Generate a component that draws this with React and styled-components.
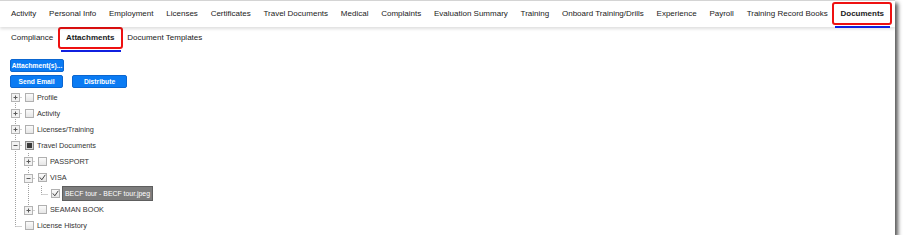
import React from "react";
import styled, { createGlobalStyle } from "styled-components";

const Global = createGlobalStyle`
  html, body { margin: 0; padding: 0; background: #ffffff; }
  body { font-family: "Liberation Sans", Arial, sans-serif; }
`;

const Frame = styled.div`
  width: 895px;
  height: 235px;
  box-sizing: border-box;
  background: #ffffff;
  border-top: 1px solid #d4d4d4;
  box-shadow: 3px 3px 4px rgba(0, 0, 0, 0.65);
  overflow: hidden;
  display: flex;
  flex-direction: column;
`;

const NavBar = styled.nav`
  position: relative;
  z-index: 1;
  display: flex;
  align-items: flex-start;
  height: 26px;
  box-sizing: border-box;
  padding: 1px 0 0 4.6px;
  background: #ffffff;
  box-shadow: 0 2px 3px rgba(0, 0, 0, 0.13);
`;

const SubBar = styled.div`
  display: flex;
  align-items: flex-start;
  padding-left: 4.6px;
`;

const Tab = styled.div`
  display: flex;
  flex-direction: column;
`;

const TabLabel = styled.span`
  display: block;
  height: ${(p) => p.$h}px;
  line-height: ${(p) => p.$h - 4}px;
  box-sizing: border-box;
  padding: 0 ${(p) => (p.$active ? 6.4 : 4.4)}px;
  margin: 0 ${(p) => (p.$active ? -2 : 0)}px;
  border: 2px solid ${(p) => (p.$active ? "#ee1111" : "transparent")};
  border-radius: 3px;
  font-size: 8px;
  font-weight: ${(p) => (p.$active ? 700 : 400)};
  color: #1a1a1a;
  white-space: nowrap;
`;

const TabLine = styled.span`
  display: block;
  height: 2px;
  margin: 1px 0 0 ${(p) => (p.$active ? 1 : 0)}px;
  background: ${(p) => (p.$active ? "#1020e0" : "transparent")};
`;

const Buttons = styled.div`
  display: flex;
  flex-direction: column;
  gap: 3px;
  margin: 7px 0 0 10px;
`;

const ButtonRow = styled.div`
  display: flex;
  gap: 9px;
`;

const Button = styled.button`
  width: ${(p) => p.$w}px;
  height: 13px;
  padding: 0;
  box-sizing: border-box;
  border: 1px solid #0b66d0;
  border-radius: 2px;
  background: #0a7bf3;
  color: #ffffff;
  font-family: "Liberation Sans", Arial, sans-serif;
  font-size: 6.7px;
  font-weight: 700;
  line-height: 11px;
  text-align: center;
  white-space: nowrap;
  cursor: pointer;
`;

const Tree = styled.ul`
  list-style: none;
  margin: 1px 0 0;
  padding: 0 0 0 9px;
`;

const Row = styled.li`
  display: flex;
  align-items: center;
  height: 16.1px;
`;

const GuideSvg = styled.svg`
  display: block;
  flex: none;
  width: 13px;
  height: 16px;
`;

const Check = styled.span`
  flex: none;
  width: 9px;
  height: 9px;
  box-sizing: border-box;
  margin-left: 3px;
  display: inline-flex;
  align-items: center;
  justify-content: center;
  border: 1px solid ${(p) => (p.$state === "partial" ? "#8a8a8a" : "#b0b0b0")};
  background: ${(p) =>
    p.$state === "partial" ? "#3a3a3a" : "linear-gradient(#fbfbfb, #e6e6e6)"};
  box-shadow: ${(p) => (p.$state === "partial" ? "inset 0 0 0 1px #d6d6d6" : "none")};
`;

const Label = styled.span`
  margin-left: ${(p) => (p.$selected ? 2 : 3)}px;
  padding: ${(p) => (p.$selected ? "1px 2px" : "0")};
  font-size: ${(p) => (p.$selected ? 6.9 : 7.3)}px;
  line-height: 11px;
  color: ${(p) => (p.$selected ? "#ffffff" : "#333333")};
  background: ${(p) => (p.$selected ? "#7c7c7c" : "transparent")};
  border: ${(p) => (p.$selected ? "1px solid #5e5e5e" : "none")};
  white-space: nowrap;
`;

const LINE = { stroke: "#a0a0a0", strokeWidth: 1, strokeDasharray: "1 1", fill: "none" };

function Guide({ kind, expander }) {
  const v = {
    pass: "M6.5 0V16",
    tee: "M6.5 0V16",
    first: "M6.5 8V16",
    elbow: "M6.5 0V8.5",
    blank: null,
  }[kind];
  const h = kind === "pass" || kind === "blank" ? null : "M6.5 8.5H13";
  return (
    <GuideSvg viewBox="0 0 13 16">
      {v && <path d={v} {...LINE} />}
      {h && <path d={h} {...LINE} />}
      {expander && (
        <g>
          <rect x="2.5" y="4.5" width="8" height="8" fill="#f2f2f2" stroke="#b4b4b4" />
          <path d="M4.5 8.5H8.5" stroke="#5a5a5a" />
          {expander === "+" && <path d="M6.5 6.5V10.5" stroke="#5a5a5a" />}
        </g>
      )}
    </GuideSvg>
  );
}

function CheckBox({ state }) {
  return (
    <Check $state={state}>
      {state === "on" && (
        <svg width="7" height="7" viewBox="0 0 7 7">
          <path d="M0.8 3.4L2.8 5.8L6.3 0.8" stroke="#444" strokeWidth="1" fill="none" />
        </svg>
      )}
    </Check>
  );
}

const navTabs = [
  "Activity",
  "Personal Info",
  "Employment",
  "Licenses",
  "Certificates",
  "Travel Documents",
  "Medical",
  "Complaints",
  "Evaluation Summary",
  "Training",
  "Onboard Training/Drills",
  "Experience",
  "Payroll",
  "Training Record Books",
  "Documents",
];

const subTabs = ["Compliance", "Attachments", "Document Templates"];

const nodes = [
  { label: "Profile", guides: [], own: "first", exp: "+", check: "off" },
  { label: "Activity", guides: [], own: "tee", exp: "+", check: "off" },
  { label: "Licenses/Training", guides: [], own: "tee", exp: "+", check: "off" },
  { label: "Travel Documents", guides: [], own: "tee", exp: "-", check: "partial" },
  { label: "PASSPORT", guides: ["pass"], own: "tee", exp: "+", check: "off" },
  { label: "VISA", guides: ["pass"], own: "tee", exp: "-", check: "on" },
  {
    label: "BECF tour - BECF tour.jpeg",
    guides: ["pass", "pass"],
    own: "elbow",
    exp: null,
    check: "on",
    selected: true,
  },
  { label: "SEAMAN BOOK", guides: ["pass"], own: "elbow", exp: "+", check: "off" },
  { label: "License History", guides: [], own: "elbow", exp: null, check: "off" },
];

export default function App() {
  return (
    <>
      <Global />
      <Frame>
        <NavBar>
          {navTabs.map((t) => {
            const active = t === "Documents";
            return (
              <Tab key={t}>
                <TabLabel $h={23} $active={active}>{t}</TabLabel>
                <TabLine $active={active} />
              </Tab>
            );
          })}
        </NavBar>
        <SubBar>
          {subTabs.map((t) => {
            const active = t === "Attachments";
            return (
              <Tab key={t}>
                <TabLabel $h={22} $active={active}>{t}</TabLabel>
                <TabLine $active={active} />
              </Tab>
            );
          })}
        </SubBar>
        <Buttons>
          <ButtonRow>
            <Button $w={54}>Attachment(s)...</Button>
          </ButtonRow>
          <ButtonRow>
            <Button $w={53}>Send Email</Button>
            <Button $w={55}>Distribute</Button>
          </ButtonRow>
        </Buttons>
        <Tree>
          {nodes.map((n) => (
            <Row key={n.label}>
              {n.guides.map((g, i) => (
                <Guide key={i} kind={g} />
              ))}
              <Guide kind={n.own} expander={n.exp} />
              <CheckBox state={n.check} />
              <Label $selected={n.selected}>{n.label}</Label>
            </Row>
          ))}
        </Tree>
      </Frame>
    </>
  );
}
